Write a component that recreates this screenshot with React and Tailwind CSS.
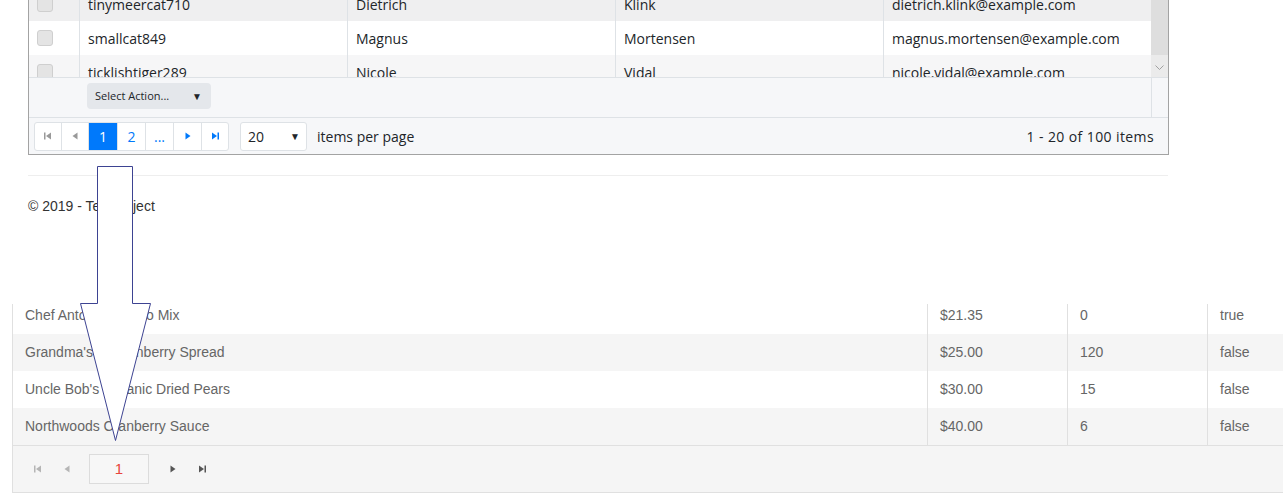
import { useState } from "react";

const users = [
  { user: "tinymeercat710", first: "Dietrich", last: "Klink", email: "dietrich.klink@example.com", bg: "bg-[#efeff0]" },
  { user: "smallcat849", first: "Magnus", last: "Mortensen", email: "magnus.mortensen@example.com", bg: "bg-white" },
  { user: "ticklishtiger289", first: "Nicole", last: "Vidal", email: "nicole.vidal@example.com", bg: "bg-[#f6f6f7]" },
];

const products = [
  { name: "Chef Anton's Gumbo Mix", price: "$21.35", stock: "0", disc: "true" },
  { name: "Grandma's Boysenberry Spread", price: "$25.00", stock: "120", disc: "false" },
  { name: "Uncle Bob's Organic Dried Pears", price: "$30.00", stock: "15", disc: "false" },
  { name: "Northwoods Cranberry Sauce", price: "$40.00", stock: "6", disc: "false" },
];

// small pager glyphs
const First = ({ className }) => (
  <svg width="8" height="8" viewBox="0 0 8 8" className={className}>
    <rect x="0" y="0.5" width="1.5" height="7" fill="currentColor" />
    <path d="M7 0.5 L2 4 L7 7.5 Z" fill="currentColor" />
  </svg>
);
const Prev = ({ className }) => (
  <svg width="6" height="8" viewBox="0 0 6 8" className={className}>
    <path d="M5.5 0.5 L0.5 4 L5.5 7.5 Z" fill="currentColor" />
  </svg>
);
const Next = ({ className }) => (
  <svg width="6" height="8" viewBox="0 0 6 8" className={className}>
    <path d="M0.5 0.5 L5.5 4 L0.5 7.5 Z" fill="currentColor" />
  </svg>
);
const Last = ({ className }) => (
  <svg width="8" height="8" viewBox="0 0 8 8" className={className}>
    <path d="M1 0.5 L6 4 L1 7.5 Z" fill="currentColor" />
    <rect x="6.5" y="0.5" width="1.5" height="7" fill="currentColor" />
  </svg>
);

const UserGrid = () => {
  const [page, setPage] = useState(1);
  return (
    <div className="ml-[28px] w-[1141px] -mt-[14px] border border-[#a3a3a3] font-['Open_Sans',sans-serif] text-[14px] text-[#212529]">
      {/* rows + scrollbar */}
      <div className="flex h-[90px] overflow-hidden">
        <div className="w-[1122px]">
          {users.map((u) => (
            <div key={u.user} className={`flex h-[34px] shrink-0 items-center ${u.bg}`}>
              <div className="flex w-[50px] h-full items-center pl-[8px]">
                <span className="block w-[16px] h-[16px] rounded-[3px] border border-[#cfcfcf] bg-[#e4e4e4]" />
              </div>
              <div className="w-[268px] h-full flex items-center pl-[8px] border-l border-[#dee2e6]">{u.user}</div>
              <div className="w-[268px] h-full flex items-center pl-[8px] border-l border-[#dee2e6]">{u.first}</div>
              <div className="w-[268px] h-full flex items-center pl-[8px] border-l border-[#dee2e6]">{u.last}</div>
              <div className="w-[268px] h-full flex items-center pl-[8px] border-l border-[#dee2e6]">{u.email}</div>
            </div>
          ))}
        </div>
        <div className="w-[17px] flex flex-col">
          <div className="h-[68px] bg-[#dedede]" />
          <div className="flex-1 bg-[#ebebeb] flex justify-center pt-[10px]">
            <svg width="9" height="6" viewBox="0 0 9 6">
              <path d="M0.5 0.5 L4.5 4.5 L8.5 0.5" stroke="#a0a0a0" fill="none" />
            </svg>
          </div>
        </div>
      </div>

      {/* action bar */}
      <div className="flex h-[40px] border-t border-[#dee2e6] bg-[#f6f7f9]">
        <div className="w-[1122px] pl-[58px] pt-[5px]">
          <div className="flex w-[124px] h-[26px] items-center justify-between rounded-sm bg-[#e4e7eb] pl-[8px] pr-[9px] text-[11px] text-[#212529]">
            <span>Select Action...</span>
            <span className="text-[10px]">▼</span>
          </div>
        </div>
        <div className="flex-1 border-l border-[#dee2e6]" />
      </div>

      {/* pager */}
      <div className="flex h-[37px] items-center border-t border-[#dee2e6] bg-[#f6f7f9] pl-[5px] pr-[14px]">
        <div className="flex h-[29px] rounded-[3px] border border-[#dee2e6] bg-white">
          <button className="w-[27px] flex items-center justify-center border-r border-[#dee2e6] text-[#999]"><First /></button>
          <button className="w-[27px] flex items-center justify-center border-r border-[#dee2e6] text-[#999]"><Prev /></button>
          {[1, 2].map((n) => (
            <button
              key={n}
              onClick={() => setPage(n)}
              className={`${n === 1 ? "w-[29px]" : "w-[28px]"} flex items-center justify-center border-r border-[#dee2e6] ${page === n ? "bg-[#0079fb] text-white" : "text-[#0079fb]"}`}
            >
              {n}
            </button>
          ))}
          <button className="w-[28px] flex items-center justify-center border-r border-[#dee2e6] text-[#0079fb]">...</button>
          <button className="w-[28px] flex items-center justify-center border-r border-[#dee2e6] text-[#0079fb]"><Next /></button>
          <button className="w-[26px] flex items-center justify-center text-[#0079fb]"><Last /></button>
        </div>
        <div className="ml-[11px] flex h-[29px] w-[67px] items-center justify-between rounded-[3px] border border-[#dee2e6] bg-white pl-[7px] pr-[6px]">
          <span>20</span>
          <span className="text-[10px]">▼</span>
        </div>
        <span className="ml-[10px]">items per page</span>
        <span className="ml-auto tracking-[0.4px]">1 - 20 of 100 items</span>
      </div>
    </div>
  );
};

const ProductGrid = () => (
  <div className="ml-[12px] w-[1360px] border-l border-[#e0e0e0] font-['Liberation_Sans',Arial,sans-serif] text-[14px] text-[#666]">
    <div className="h-[141px] overflow-hidden">
      <div className="-mt-[7px]">
        {products.map((p, i) => (
          <div key={p.name} className={`flex h-[37px] items-center ${i % 2 ? "bg-[#f5f5f5]" : "bg-white"}`}>
            <div className="w-[914px] pl-[12px]">{p.name}</div>
            <div className="w-[140px] h-full flex items-center pl-[12px] border-l border-[#e0e0e0]">{p.price}</div>
            <div className="w-[140px] h-full flex items-center pl-[12px] border-l border-[#e0e0e0]">{p.stock}</div>
            <div className="flex-1 h-full flex items-center pl-[12px] border-l border-[#e0e0e0]">{p.disc}</div>
          </div>
        ))}
      </div>
    </div>
    <div className="flex h-[48px] items-center border-y border-[#e0e0e0] bg-[#f5f5f5] pl-[21px]">
      <First className="text-[#b5b5b5]" />
      <Prev className="ml-[22px] text-[#b5b5b5]" />
      <div className="ml-[19px] flex h-[30px] w-[60px] items-center justify-center border border-[#dcdcdc] bg-[#f7f7f7] text-[15px] text-[#e8453c]">1</div>
      <Next className="ml-[21px] text-[#555]" />
      <Last className="ml-[22px] text-[#555]" />
    </div>
  </div>
);

export default function App() {
  return (
    <div className="relative w-[1283px] h-[499px] overflow-hidden bg-white">
      <UserGrid />

      <div className="ml-[28px] mt-[20px] w-[1140px] border-t border-[#eeeeee]" />
      <p className="ml-[28px] mt-[20px] font-['Liberation_Sans',Arial,sans-serif] text-[14px] text-[#333]">© 2019 - TestProject</p>

      <div className="mt-[87px]">
        <ProductGrid />
      </div>

      {/* callout arrow pointing at the pager */}
      <svg className="absolute left-0 top-0 pointer-events-none" width="200" height="460" viewBox="0 0 200 460">
        <polygon
          points="97.5,166.5 132.5,166.5 132.5,303.5 150.5,303.5 115.5,440.5 80.5,303.5 97.5,303.5"
          fill="white"
          stroke="#3d4392"
          strokeWidth="1"
        />
      </svg>
    </div>
  );
}
